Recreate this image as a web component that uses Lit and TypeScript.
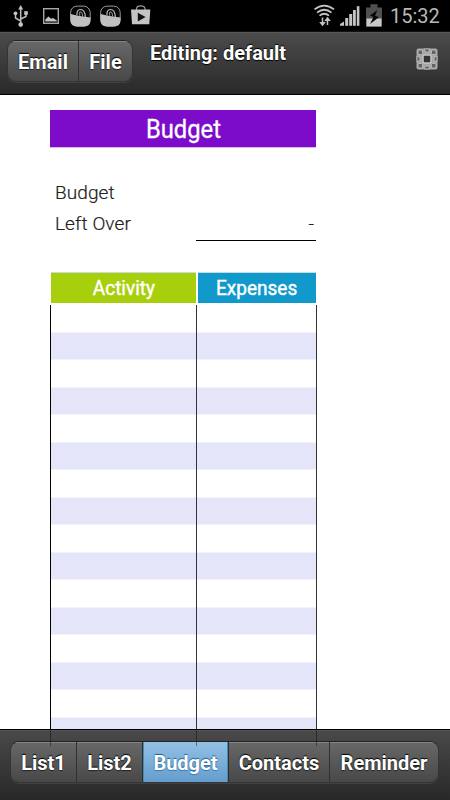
import { LitElement, html, css, svg } from "lit";
import { customElement } from "lit/decorators.js";
import { classMap } from "lit/directives/class-map.js";

@customElement("status-bar")
class StatusBar extends LitElement {
  static styles = css`
    :host { display: block; height: 31px; background: #000; }
    .bar { display: flex; height: 31px; justify-content: space-between; }
    svg { display: block; }
    .right { display: flex; }
    .clock { width: 60px; font: 400 20px/33px Roboto, sans-serif; color: #b8b8b8; white-space: nowrap; }
  `;
  private basket(x: number) {
    return svg`<g transform="translate(${x} 5.5)">
      <rect x="0.6" y="0.6" width="19.6" height="20" rx="6.5" fill="#080808" stroke="#999" stroke-width="1"/>
      <path d="M0.5 8.6 L8 10.2 L20.5 12 V14.5 Q20.5 21 14 21 H7 Q0.5 21 0.5 14.5Z" fill="#c0c0c0"/>
      <path d="M7 10 Q6.5 4 10.5 4 Q15 4 15.3 11.5" fill="none" stroke="#b5b5b5" stroke-width="1.2"/>
      <path d="M9.7 10.3 V6.5 Q12.5 5.5 12.6 11" fill="none" stroke="#999" stroke-width="1"/>
    </g>`;
  }
  render() {
    return html`<div class="bar">
      <svg width="160" height="31" viewBox="0 0 160 31">
        <g stroke="#bbb" stroke-width="1.5" fill="none">
          <path d="M20.7 8 V24 M20.7 21 L15.5 18 V13.5 M20.7 19 L26 16.5 V13"/>
        </g>
        <g fill="#c4c4c4"><path d="M20.7 5 L23.2 9.5 H18.2Z"/><circle cx="20.7" cy="24.6" r="2.3"/><circle cx="15.5" cy="13.3" r="1.9"/><rect x="24.2" y="11.2" width="3.6" height="3.6"/></g>
        <rect x="43.7" y="8.7" width="14.6" height="14.6" fill="none" stroke="#a8a8a8" stroke-width="1.4"/>
        <path d="M45.3 21.5 V19.5 L48.5 16.5 L51 18.7 L53 18 L56.8 20.5 V21.5Z" fill="#c4c4c4"/>
        ${this.basket(70)}${this.basket(100)}
        <path d="M136.5 10 V8.5 Q137 5.8 140.5 5.8 Q144.5 5.8 145 8.5 V10" fill="none" stroke="#999" stroke-width="1.2"/>
        <path d="M131 9.5 H150.3 L149.3 24.3 H132Z" fill="#c4c4c4"/>
        <path d="M137.8 12.7 L145.6 17 L137.8 21.5Z" fill="#111"/>
      </svg>
      <div class="right">
        <svg width="81" height="31" viewBox="309 0 81 31">
          <g fill="none" stroke="#c4c4c4" stroke-width="1.8">
            <path d="M314.5 9.4 Q324.3 1.8 334 9.4"/><path d="M317 12.6 Q324.3 6.9 331.5 12.6"/><path d="M319.5 15.6 Q324.3 11.9 329 15.6"/>
            <path d="M322.5 17.5 V24 M327.5 25 V19" stroke-width="1.5"/>
          </g>
          <path d="M319.2 22 H325.8 L322.5 26.3Z M324.3 21 H330.8 L327.5 16.8Z" fill="#c4c4c4"/>
          <g fill="#c4c4c4"><path d="M340 25.8 V24 L344 21.5 V25.8Z"/><rect x="345.2" y="18" width="3" height="7.8"/><rect x="349.2" y="14" width="3" height="11.8"/><rect x="353" y="10" width="2.8" height="15.8"/><rect x="356.8" y="6.2" width="2.6" height="19.6"/></g>
          <path d="M366 7.5 H370.5 V4.3 H377.5 V7.5 H382 V26.5 H366Z" fill="#505050"/>
          <rect x="366.5" y="18.5" width="15" height="8" fill="#c8c8c8"/>
          <path d="M377.5 10 L370 15.6 L373.5 17 L370 24 L378.8 17.2 L375 15.5Z" fill="#050505"/>
        </svg>
        <div class="clock">15:32</div>
      </div>
    </div>`;
  }
}

@customElement("segment-group")
class SegmentGroup extends LitElement {
  static properties = { items: { attribute: false }, active: {} };
  declare items: { label: string; width: number }[];
  declare active: string;
  static styles = css`
    :host { display: block; }
    .group { display: flex; height: 42px; box-sizing: border-box; border: 1px solid #353535; border-top-color: #242424; border-radius: 9px; overflow: hidden; background: linear-gradient(#686868, #484848); box-shadow: 0 1px 0 #414141; }
    .seg { flex: none; box-sizing: border-box; height: 40px; border-right: 1px solid #303030; box-shadow: inset 0 1px 0 #858585; text-align: center; white-space: nowrap; color: #fff; font: 700 20px/42px Roboto, sans-serif; text-shadow: 0 -1px 1px #000, 0 1px 1px #222; }
    .seg:last-child { border-right: 0; }
    .on { background: linear-gradient(#93c1e6, #649dcd); box-shadow: inset 1px 0 #438ab4, inset -1px 0 #438ab4; text-shadow: 0 -1px 1px #225f8d, 0 1px 1px #3b79ac; }
  `;
  render() {
    return html`<div class="group">${this.items.map(
      (i) => html`<div class=${classMap({ seg: true, on: i.label === this.active })} style="width:${i.width}px">${i.label}</div>`
    )}</div>`;
  }
}

@customElement("budget-sheet")
class BudgetSheet extends LitElement {
  static styles = css`
    :host { display: block; height: 634px; overflow: hidden; background: #fff; font-family: Roboto, sans-serif; }
    .sheet { width: 267px; padding: 15px 0 0 50px; }
    .title { width: 266px; height: 37px; background: #7d0cca; border-bottom: 1px solid #d9b7f1; color: #fff; text-align: center; font: 400 25px/39px Roboto, sans-serif; -webkit-text-stroke: .3px #fff; }
    .title span { display: inline-block; transform: scaleX(.95); }
    .line { display: flex; justify-content: space-between; width: 261px; padding-left: 5px; font-size: 19px; color: #222; height: 31px; line-height: 33px; font-weight: 300; letter-spacing: .1px; -webkit-text-stroke: .2px #222; }
    .first { margin-top: 28px; }
    .val { width: 120px; box-sizing: border-box; height: 34px; padding-right: 2px; border-bottom: 1px solid #000; text-align: right; }
    .heads { display: flex; gap: 2px; margin: 34px 0 1px 1px; height: 32px; }
    .head { height: 31px; border-top: 1px solid #c5dce0; box-sizing: border-box; color: #fff; text-align: center; font: 400 19.5px/31px Roboto, sans-serif; -webkit-text-stroke: .4px #fff; }
    .head span { display: inline-block; transform: scaleX(.975); }
    .green { width: 145px; background: #a8cf0c; }
    .blue { width: 118px; background: #1199cc; }
    .rows { display: grid; grid-template-columns: 146px 120px; width: 266px; height: 440px; border-left: 1px solid #000; background: repeating-linear-gradient(#fff 0 27.5px, #e4e5f9 27.5px 55px) 0 -.5px; }
    .col { border-right: 1px solid #333; box-sizing: border-box; }
  `;
  render() {
    return html`<div class="sheet">
      <div class="title"><span>Budget</span></div>
      <div class="line first"><span>Budget</span></div>
      <div class="line"><span>Left Over</span><span class="val">-</span></div>
      <div class="heads"><div class="head green"><span>Activity</span></div><div class="head blue"><span>Expenses</span></div></div>
      <div class="rows"><div class="col"></div><div class="col"></div></div>
    </div>`;
  }
}

@customElement("app-root")
class AppRoot extends LitElement {
  static styles = css`
    :host { display: block; width: 450px; height: 800px; overflow: hidden; position: relative; background: #fff; }
    .top { display: flex; box-sizing: border-box; height: 64px; padding: 8px 12px 0 7px; border-top: 1px solid #111; border-bottom: 1px solid #000; background: linear-gradient(#4c4c4c, #292929); box-shadow: inset 0 1px #595959; }
    .name { margin-left: 17px; flex: 1; color: #fff; font: 700 20px/26px Roboto, sans-serif; text-shadow: 0 -1px 1px #000, 0 1px 1px #000; }
    .grid { display: block; margin-top: 8px; }
    .bottom { box-sizing: border-box; height: 71px; padding: 11px 11px 0 10px; border-top: 1px solid #000; background: linear-gradient(#4a4a4a, #282828); box-shadow: inset 0 1px #565656; }
    .trace { position: absolute; top: 729px; height: 17px; width: 1px; background: #000; opacity: .4; }
    .a { left: 50px; } .b { left: 196px; } .c { left: 316px; }
  `;
  render() {
    return html`
      <status-bar></status-bar>
      <div class="top">
        <segment-group .items=${[{ label: "Email", width: 71 }, { label: "File", width: 53 }]}></segment-group>
        <div class="name">Editing: default</div>
        <svg class="grid" width="22" height="22" viewBox="0 0 22 22">
          <rect x="0.5" y="0.5" width="21" height="21" rx="2" fill="#a6a6a6"/>
          <g fill="#626262" stroke="#b8b8b8" stroke-width="1">
            <rect x="2" y="2" width="4.5" height="4.5" rx="1"/><rect x="15.5" y="2" width="4.5" height="4.5" rx="1"/><rect x="2" y="15.5" width="4.5" height="4.5" rx="1"/><rect x="15.5" y="15.5" width="4.5" height="4.5" rx="1"/>
            <path d="M8 1 H14 L12.5 4 H9.5Z M8 21 H14 L12.5 18 H9.5Z M1 8 V14 L4 12.5 V9.5Z M21 8 V14 L18 12.5 V9.5Z"/>
          </g>
          <path d="M8 7 H14 L15 8 V14 L14 15 H8 L7 14 V8Z" fill="#333" stroke="#c4c4c4" stroke-width="1.5"/>
        </svg>
      </div>
      <budget-sheet></budget-sheet>
      <div class="bottom">
        <segment-group .active=${"Budget"} .items=${[{ label: "List1", width: 66 }, { label: "List2", width: 66 }, { label: "Budget", width: 86 }, { label: "Contacts", width: 101 }, { label: "Reminder", width: 108 }]}></segment-group>
      </div>
      <div class="trace a"></div><div class="trace b"></div><div class="trace c"></div>
    `;
  }
}
